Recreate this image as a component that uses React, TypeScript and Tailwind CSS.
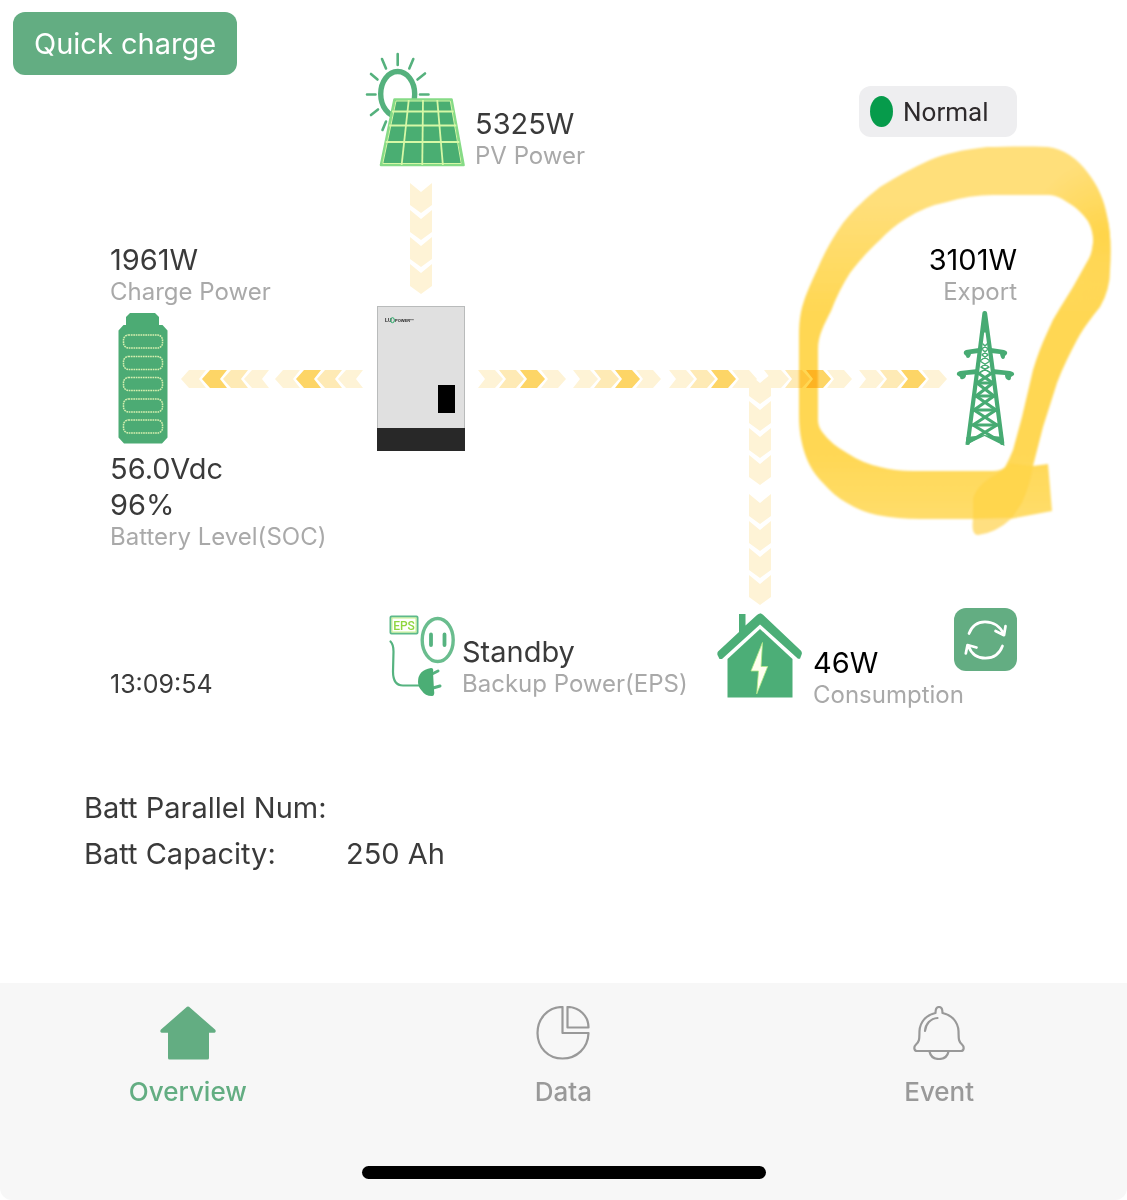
import React from 'react';

type Direction = 'left' | 'right';

interface ReadingProps {
    value: string;
    label: string;
    align?: 'left' | 'right';
    strong?: boolean;
}

const Reading: React.FC<ReadingProps> = ({ value, label, align = 'left', strong = false }) => (
    <div className={align === 'right' ? 'text-right' : 'text-left'}>
        <p className={`text-[29px] leading-9 ${strong ? 'text-black' : 'text-[#3a3a3a]'}`}>{value}</p>
        <p className="text-2xl leading-7 text-[#a9a9a9]">{label}</p>
    </div>
);

const FLOW_COLORS = ['#fef3d6', '#feeab5', '#fdd566', '#fef3d6'];

const FlowArrows: React.FC<{ direction: Direction }> = ({ direction }) => (
    <svg viewBox="0 0 88 18" className={`h-[18px] w-[88px] shrink-0 ${direction === 'left' ? '-scale-x-100' : ''}`} aria-hidden="true">
        {FLOW_COLORS.map((color, i) => (
            <path key={i} d="M0 0h17l8 9-8 9H0l7-9z" transform={`translate(${i * 21} 0)`} fill={color} />
        ))}
    </svg>
);

const DownArrows: React.FC = () => (
    <svg viewBox="0 0 22 111" className="h-[111px] w-[22px] shrink-0" aria-hidden="true">
        {[0, 27, 54, 81].map((y) => (
            <path key={y} d="M0 0l11 9 11-9v22l-11 8-11-8z" transform={`translate(0 ${y})`} fill="#fef3d6" />
        ))}
    </svg>
);

const PANEL_COLUMNS = [0, 0.25, 0.5, 0.75, 1];
const PANEL_ROWS = [99.5, 111.5, 125.5, 142, 165];

const SolarIcon: React.FC = () => (
    <svg viewBox="365 52 100 115" className="h-[115px] w-[100px] shrink-0" aria-hidden="true">
        <g fill="none" stroke="#55b17d" strokeLinecap="round" strokeWidth="2.6">
            <ellipse cx="397.7" cy="94" rx="17" ry="22.5" strokeWidth="5.4" />
            <path d="M397.7 54v11M382 59l4 9.500M413.300 59l-4 9.500M371 74l6.500 5.500M425 73.500l-7.500 6M367 94.500h8.500M420 94.500h8.500M371 115l7-5.500M382.500 130l3.500-8.500" />
        </g>
        <path d="M394.500 99.500h57L463.500 165H381z" fill="#4aae72" stroke="#86db86" strokeWidth="2.6" strokeLinejoin="round" />
        <g stroke="#d6f8a6" strokeWidth="1.8" fill="none">
            {PANEL_COLUMNS.slice(1, 4).map((t) => (
                <path key={t} d={`M${394.5 + 57 * t} 100L${381 + 82.5 * t} 165`} />
            ))}
            {PANEL_ROWS.slice(1, 4).map((y) => {
                const k = (y - 99.5) / 65.5;
                return <path key={y} d={`M${394.5 - 13.5 * k} ${y}H${451.5 + 12 * k}`} />;
            })}
            <path d="M396 101h54.300l11 62.500h-78.500z" strokeWidth="1" />
        </g>
    </svg>
);

const BatteryIcon: React.FC = () => (
    <svg viewBox="0 0 50 131" className="h-[131px] w-[50px] shrink-0" aria-hidden="true">
        <path d="M12 0h25l4 4v8h3.500l5 5.500v107l-5.500 6H6l-5.500-6v-107L5.500 12H8V4z" fill="#4cab74" />
        {[22, 43.5, 64.500, 86, 107].map((y) => (
            <rect key={y} x="5.500" y={y} width="39" height="13" rx="5" fill="none" stroke="#d5efaf" strokeWidth="1.500" strokeDasharray="1.700 .7" />
        ))}
    </svg>
);

const InverterUnit: React.FC = () => (
    <svg viewBox="0 0 88 145" className="h-[145px] w-[88px] shrink-0" role="img" aria-label="Inverter">
        <rect x=".5" y=".5" width="87" height="144" fill="#e0e0e0" stroke="#b9bbbb" />
        <rect x="0" y="122" width="88" height="23" fill="#282828" />
        <rect x="61" y="79" width="17" height="28" fill="#000" />
        <g fontFamily="Liberation Sans, sans-serif" fontSize="5" fontWeight="700" fill="#222">
            <text x="8" y="16">LU</text>
            <text x="18" y="16" fontSize="4">POWER™</text>
        </g>
        <ellipse cx="15.500" cy="14.200" rx="1.900" ry="2.500" fill="none" stroke="#25a765" strokeWidth="1" />
    </svg>
);

const TowerIcon: React.FC = () => (
    <svg viewBox="956 311 59 137" className="h-[137px] w-[59px] shrink-0" aria-hidden="true">
        <g fill="none" stroke="#47ab73" strokeLinejoin="round" strokeLinecap="round">
            <path d="M984.500 314L978.500 362 967.800 444M985 314L991.500 362 1002.200 444" strokeWidth="4.200" />
            <path d="M983 345l5 5-6 6 8 6-9 6 10 6M987 345l-5 5 6 6-8 6 9 6-10 6" strokeWidth="1.500" />
            <path d="M978 374l15 10-17 13 20 14-23 15 28 17M992 374l-15 10 17 13-20 14 23 15-28 17" strokeWidth="3.200" />
            <path d="M977 384h16M976 397h18M974 411h22M972 426h26" strokeWidth="3" />
        </g>
        <g fill="#47ab73">
            <path d="M979 349l-13 2q-3 1-2 4l2 2q0 2 2 2t3-4l8-1zM991 349l13 2q4 1 3 4l-2 2q0 3-2 3t-3-5l-9-1z" />
            <path d="M978 370l-18 2q-4 1-3 4l3 2q0 3 3 2t3-4l12-1zM992 370l18 2q5 1 4 4l-3 2q0 4-3 3t-3-5l-13-1z" />
            <path d="M965.500 446l1-8 18-2 18.500 2 1.500 9-20-10z" />
            <path d="M984.500 311.500l3 22h-6z" />
        </g>
    </svg>
);

const EpsIcon: React.FC = () => (
    <svg viewBox="387 615 70 84" className="h-[84px] w-[70px] shrink-0" aria-hidden="true">
        <rect x="390.500" y="617.500" width="27" height="17" rx="1" fill="#fff" stroke="#5db98b" strokeWidth="2" />
        <rect x="392" y="619" width="24" height="14" fill="none" stroke="#c8f28a" strokeWidth="1" />
        <text x="404" y="630.500" textAnchor="middle" fontFamily="Roboto, sans-serif" fontSize="12" fontWeight="500" fill="#8fd63f">EPS</text>
        <g fill="none" stroke="#56b380" strokeLinecap="round">
            <ellipse cx="437.700" cy="641" rx="15.500" ry="21.500" strokeWidth="3.400" stroke="#6abd8e" />
            <path d="M431 635.500v10.500M444.500 635.500v10.500" strokeWidth="3.800" />
            <path d="M390.500 642.500q3 3 3 10l-.5 20q0 14 10 14h16" strokeWidth="2.200" />
            <path d="M432 675l6-3M433 689l7-2" strokeWidth="3" />
        </g>
        <path d="M431 669q3 0 2 4l1 18q1 6-2 6-7 0-10-5-4-4-4-9 0-12 13-14z" fill="#4bae75" />
    </svg>
);

const HouseIcon: React.FC = () => (
    <svg viewBox="717 612 86 87" className="h-[87px] w-[86px] shrink-0" aria-hidden="true">
        <g fill="#4cae77">
            <path d="M760 613.300q1.500 0 3 1.500l38 36q1.500 2 .5 4l-1.500 4h-2L760 624.500l-38 34.500h-2.500l-2-4q-.5-2 .5-3.500l21-19.500v-18h6.500v11.500l11.500-10.500q1.500-1.500 3-1.500z" />
            <path d="M760 629l32.500 30v38.500h-65V659z" />
        </g>
        <path d="M762.500 642.500L751 671h7.500L756.700 694l11-27.500H761z" fill="#fffef0" stroke="#b4ea86" strokeWidth=".8" />
    </svg>
);

const RefreshIcon: React.FC = () => (
    <svg viewBox="0 0 63 63" className="h-[63px] w-[63px]" fill="none" stroke="#fff" strokeWidth="2.700" strokeLinecap="round" strokeLinejoin="round" aria-hidden="true">
        <path d="M15 25.500C18 17.500 24 13.800 31 13.800c8.500 0 15.500 4.700 18.500 12.200M41.500 23l8.500 4.200 1.500-9" />
        <path d="M48.500 38C45.500 46 39 50.200 31.500 50.200c-8 0-14-4.200-17-12M11.800 45.500l1.700-8.500 9 2.500" />
    </svg>
);

const HomeTabIcon: React.FC = () => (
    <svg viewBox="0 0 56 54" className="h-[54px] w-14" fill="currentColor" aria-hidden="true">
        <path d="M27 .8q1-.6 2 0l26 22.700q1 1 .6 2.200t-1.600 1H49V52q0 1.500-1.500 1.500h-38Q8 53.500 8 52V26.700H2q-1.300 0-1.600-1T1 23.500z" />
    </svg>
);

const DataTabIcon: React.FC = () => (
    <svg viewBox="0 0 54 54" className="h-[54px] w-[54px]" fill="none" stroke="currentColor" strokeWidth="2.200" strokeLinejoin="round" aria-hidden="true">
        <path d="M26.500 1C12 1 1.500 12.500 1.500 27s10.500 25.500 25 25.500S52 42 52.500 27h-26z" />
        <path d="M31.500 1v20.500h21C52.500 10 43.500 1 31.500 1z" />
    </svg>
);

const EventTabIcon: React.FC = () => (
    <svg viewBox="0 0 52 54" className="h-[54px] w-[52px]" fill="none" stroke="currentColor" strokeWidth="2.200" strokeLinejoin="round" strokeLinecap="round" aria-hidden="true">
        <path d="M22.500 7c0-3.500 1-6 3.500-6s3.500 2.500 3.500 6C39 9 45 16 45.500 25c.3 7-.5 10 3.500 13.500 3 3 1.500 6.500-1 6.500H4c-2.500 0-4-3.500-1-6.500C7 35 6.200 32 6.500 25 7 16 13 9 22.500 7z" />
        <path d="M16.500 45.500C17.500 50.500 21 53 26 53s8.500-2.500 9.500-7.500M12 25c.5-7 5.500-12.500 12.500-13" />
    </svg>
);

// Marker ring drawn round the export reading
const ExportMarker: React.FC = () => (
    <svg viewBox="787 137 340 406" className="pointer-events-none absolute right-0 top-[137px] h-[406px] w-[340px] mix-blend-multiply" aria-hidden="true">
        <defs>
            <linearGradient id="ink" gradientUnits="userSpaceOnUse" x1="0" y1="147" x2="0" y2="520">
                <stop offset="0" stopColor="#ffdf7a" />
                <stop offset=".15" stopColor="#ffdf7a" />
                <stop offset=".45" stopColor="#ffd752" />
                <stop offset=".8" stopColor="#ffd752" />
                <stop offset="1" stopColor="#ffdd6b" />
            </linearGradient>
            <radialGradient id="corner" gradientUnits="userSpaceOnUse" cx="1104" cy="235" r="75">
                <stop offset="0" stopColor="#ffd54a" />
                <stop offset="1" stopColor="#ffd54a" stopOpacity="0" />
            </radialGradient>
            <path
                id="ring"
                fillRule="evenodd"
                d="M1048 147C1020 146 1005 147 987 147C960 150 945 154 930 160C912 168 896 177 880 187C866 198 854 209 843 223C831 240 824 254 817 270C810 285 804 298 801 312Q799 322 799 335V415C799 430 801 442 805 454C809 466 815 475 823 483C830 491 838 498 847 503Q862 512 877 515Q898 519 920 519H1010L1052 511L1048 464L1033 466L1043 427L1057 383C1063 367 1070 353 1077 340C1084 327 1092 317 1100 307Q1110 290 1110 270C1111 250 1111 232 1107 216C1104 200 1098 186 1088 173Q1071 150 1048 147Z
                   M1050 195Q1059 196 1067 202C1076 207 1083 214 1088 221Q1094 232 1093 243C1092 251 1091 256 1087 262L1073 287L1060 308Q1052 320 1047 333Q1039 350 1033 370L1022 417L1013 450Q1009 460 1005 467Q1001 471 993 471H913Q895 471 880 467Q862 463 847 453Q831 444 823 433Q818 427 818 420V350C818 335 824 325 831 311Q839 290 850 273C859 261 869 250 880 240Q892 227 907 218Q926 206 947 202Q970 195 993 195Z"
            />
            <filter id="soft" x="-5%" y="-5%" width="110%" height="110%">
                <feGaussianBlur stdDeviation="1.300" />
            </filter>
        </defs>
        <g filter="url(#soft)">
            <use href="#ring" fill="url(#ink)" />
            <use href="#ring" fill="url(#corner)" />
            <path d="M973 519Q971 535 978 535Q996 533 1012 518z" fill="#ffdf80" />
            <path d="M973 519V498Q977 486 990 478Q1004 471 1010 463L1033 466Q1030 485 1022 503L1012 518z" fill="#ffd549" opacity=".8" />
        </g>
    </svg>
);

const TABS = [
    { name: 'Overview', Icon: HomeTabIcon },
    { name: 'Data', Icon: DataTabIcon },
    { name: 'Event', Icon: EventTabIcon },
];

const App: React.FC = () => {
    return (
        <div className="relative flex min-h-screen flex-col bg-white font-['Inter',sans-serif]">
            <header className="grid grid-cols-[365px_1fr_auto] items-start pr-[110px]">
                <button type="button" className="mt-3 ml-[13px] h-[63px] justify-self-start rounded-xl bg-[#63ad82] px-[21px] text-[29px] text-white">
                    Quick charge
                </button>
                <div className="flex items-end gap-[10px] pt-[52px]">
                    <div className="pb-[3px]">
                        <SolarIcon />
                    </div>
                    <Reading value="5325W" label="PV Power" />
                </div>
                <div className="mt-[86px] flex h-[51px] w-[158px] items-center gap-[10px] rounded-xl bg-[#eeeef0] pl-[11px]">
                    <span className="h-[31px] w-[23px] rounded-[50%] bg-[#069b4b]" />
                    <span className="font-['Roboto',sans-serif] text-[26px] leading-9 text-[#2e2a2c]">Normal</span>
                </div>
            </header>

            <main className="px-[110px]">
                <section className="grid grid-cols-[267px_88px_284fr_22px_246fr] grid-rows-[136px_145px_154px]" aria-label="Energy flow">
                    <div className="self-end">
                        <Reading value="1961W" label="Charge Power" />
                    </div>
                    <div className="mt-[13px] flex justify-center">
                        <DownArrows />
                    </div>
                    <div className="col-span-3 self-end">
                        <Reading value="3101W" label="Export" align="right" strong />
                    </div>

                    <div className="col-start-1 row-start-2 flex items-center pl-2">
                        <BatteryIcon />
                        <div className="flex flex-1 justify-between pr-[14px] pl-[13px]">
                            <FlowArrows direction="left" />
                            <FlowArrows direction="left" />
                        </div>
                    </div>
                    <div className="col-start-2 row-start-2">
                        <InverterUnit />
                    </div>
                    <div className="col-span-3 col-start-3 row-start-2 flex items-center pl-[13px]">
                        <div className="flex flex-1 justify-between pr-[9px]">
                            <FlowArrows direction="right" />
                            <FlowArrows direction="right" />
                            <FlowArrows direction="right" />
                            <FlowArrows direction="right" />
                            <FlowArrows direction="right" />
                        </div>
                        <div className="pr-[2px]">
                            <TowerIcon />
                        </div>
                    </div>

                    <div className="col-start-1 row-start-3">
                        <p className="text-[29px] leading-9 text-[#3a3a3a]">56.0Vdc</p>
                        <Reading value="96%" label="Battery Level(SOC)" />
                    </div>
                    <div className="col-start-4 row-span-2 row-start-2 flex flex-col gap-[9px] self-end">
                        <DownArrows />
                        <DownArrows />
                    </div>
                </section>

                <section className="mt-[3px] grid h-[101px] grid-cols-[277px_330px_1fr]" aria-label="Loads">
                    <p className="mt-[62px] text-[25px] leading-7 text-[#3a3a3a]">13:09:54</p>
                    <div className="mt-[6px] flex items-end gap-[5px] self-start">
                        <EpsIcon />
                        <Reading value="Standby" label="Backup Power(EPS)" />
                    </div>
                    <div className="col-start-3 row-start-1 flex items-end gap-[10px] self-end">
                        <div className="pb-[10px]">
                            <HouseIcon />
                        </div>
                        <Reading value="46W" label="Consumption" strong />
                    </div>
                    <button type="button" aria-label="Refresh" className="col-start-3 row-start-1 self-start justify-self-end rounded-xl bg-[#63ad82]">
                        <RefreshIcon />
                    </button>
                </section>
            </main>

            <dl className="mt-[76px] grid grid-cols-[262px_1fr] pl-[84px] text-[29px] leading-[46px] text-[#3a3a3a]">
                <dt>Batt Parallel Num:</dt>
                <dd />
                <dt>Batt Capacity:</dt>
                <dd>250 Ah</dd>
            </dl>

            <nav className="mt-auto rounded-b-xl bg-[#f7f7f7] pt-[23px] pb-[21px]">
                <div className="grid grid-cols-3">
                    {TABS.map(({ name, Icon }, i) => (
                        <a
                            key={name}
                            href={`#${name.toLowerCase()}`}
                            aria-current={i === 0 ? 'page' : undefined}
                            className={`flex flex-col items-center gap-4 text-[26px] leading-8 font-medium ${i === 0 ? 'text-[#63ad82]' : 'text-[#999999]'}`}
                        >
                            <Icon />
                            {name}
                        </a>
                    ))}
                </div>
                <div className="mx-auto mt-[58px] h-[13px] w-[404px] rounded-full bg-black" />
            </nav>

            <ExportMarker />
        </div>
    );
};

export default App;
